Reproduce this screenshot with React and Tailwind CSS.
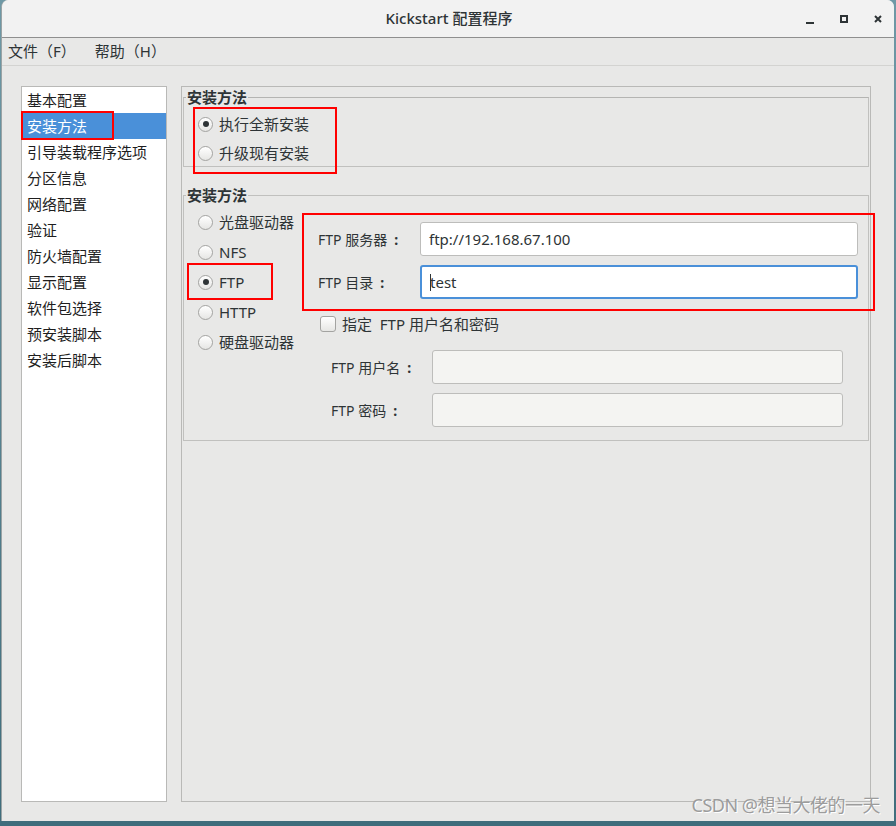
import React from 'react'

const cjk = { fontFamily: '"Noto Sans", "Noto Sans CJK SC", sans-serif' }

const navItems = [
  '基本配置',
  '安装方法',
  '引导装载程序选项',
  '分区信息',
  '网络配置',
  '验证',
  '防火墙配置',
  '显示配置',
  '软件包选择',
  '预安装脚本',
  '安装后脚本',
]

const methods = ['光盘驱动器', 'NFS', 'FTP', 'HTTP', '硬盘驱动器']

function Radio({ checked }) {
  return (
    <span className="w-[15px] h-[15px] rounded-full border border-[#a3a3a1] bg-gradient-to-b from-white to-[#e6e6e4] flex items-center justify-center shrink-0 shadow-[inset_0_1px_0_#fff]">
      {checked && <span className="w-[6px] h-[6px] rounded-full bg-[#2e3436]" />}
    </span>
  )
}

function RadioRow({ label, checked, h = 'h-[30px]' }) {
  return (
    <div className={`flex items-center gap-[6px] ${h}`}>
      <Radio checked={checked} />
      <span className="text-[15px] text-[#2e3436]">{label}</span>
    </div>
  )
}

function Field({ label, value, focused, disabled, labelW }) {
  return (
    <div className="flex items-center h-[34px]">
      <span className={`text-[14px] text-[#2e3436] shrink-0 flex items-center ${labelW}`}>
        {label}
        <span className="ml-[7px] font-bold">:</span>
      </span>
      <div
        className={
          'flex-1 h-[34px] rounded-[3px] flex items-center px-[8px] text-[15px] text-[#2e3436] ' +
          (focused
            ? 'border-2 border-[#4a90d9] bg-white'
            : disabled
            ? 'border border-[#bdbdbb] bg-[#f4f4f2]'
            : 'border border-[#bdbdbb] bg-white')
        }
      >
        {focused && <span className="w-[1px] h-[17px] bg-[#2e3436] -mr-[1px]" />}
        {value}
      </div>
    </div>
  )
}

function Legend({ children }) {
  return (
    <legend className="ml-[2px] px-[1px] text-[15px] leading-[20px] font-bold text-[#2e3436]">
      {children}
    </legend>
  )
}

export default function App() {
  return (
    <div className="w-[896px] h-[826px] bg-gradient-to-b from-[#6f99a6] to-[#3f6d7c] pl-[1px] pr-[2px] relative overflow-hidden" style={cjk}>
      <div className="w-[893px] h-[821px] bg-[#e8e8e7] rounded-t-[7px] flex flex-col border-l border-[#9aa3a5]">
        {/* title bar */}
        <div className="h-[38px] shrink-0 bg-[#f2f2f2] border-b border-[#8f8f8f] rounded-t-[7px] flex items-center relative">
          <div className="flex-1 text-center text-[15px] font-medium text-[#2e3436] pl-[2px]">Kickstart 配置程序</div>
          <div className="absolute right-[12px] top-[15px] flex items-start gap-[26px]">
            <span className="w-[8px] h-[8px] flex items-end"><span className="w-[8px] h-[2px] bg-[#2e3436] mb-[-1px]" /></span>
            <span className="w-[8px] h-[8px] border-2 border-[#2e3436]" />
            <svg width="8" height="8" viewBox="0 0 8 8"><path d="M1 1L7 7M7 1L1 7" stroke="#2e3436" strokeWidth="2" /></svg>
          </div>
        </div>
        {/* menu */}
        <div className="h-[28px] shrink-0 border-b border-[#d3d3d1] flex items-center text-[15px] text-[#2e3436]">
          <span className="ml-[6px]">文件（F）</span>
          <span className="ml-[19px]">帮助（H）</span>
        </div>
        {/* content */}
        <div className="flex pt-[20px] pl-[19px]">
          <div className="w-[146px] h-[716px] bg-white border border-[#b9b9b7]">
            {navItems.map((t, i) => (
              <div
                key={t}
                className={
                  'h-[26px] flex items-center pl-[5px] text-[15px] ' +
                  (i === 1 ? 'bg-[#4a90d9] text-white' : 'text-[#1e1e1e]')
                }
              >
                {t}
              </div>
            ))}
          </div>
          <div className="ml-[14px] w-[690px] h-[716px] border border-[#b9b9b7] px-[1px]">
            <fieldset className="border border-[#c0c0be] border-t-[#b4b4b2] pb-[1px]">
              <Legend>安装方法</Legend>
              <div className="pl-[14px] pt-[5px]">
                <RadioRow label="执行全新安装" checked h="h-[24px]" />
                <div className="h-[5px]" />
                <RadioRow label="升级现有安装" h="h-[24px]" />
              </div>
            </fieldset>
            <fieldset className="mt-[18px] border border-[#c0c0be] pb-[13px]">
              <Legend>安装方法</Legend>
              <div className="flex">
                <div className="w-[134px] pl-[14px] pt-[2px] shrink-0">
                  {methods.map((m) => (
                    <RadioRow key={m} label={m} checked={m === 'FTP'} />
                  ))}
                </div>
                <div className="w-[550px] pt-[17px] pr-[10px]">
                  <Field label="FTP 服务器" value="ftp://192.168.67.100" labelW="w-[102px]" />
                  <div className="h-[9px]" />
                  <Field label="FTP 目录" value="test" focused labelW="w-[102px]" />
                  <div className="mt-[16px] h-[18px] flex items-center ml-[2px] gap-[6px]">
                    <span className="w-[16px] h-[16px] rounded-[3px] border border-[#a3a3a1] bg-gradient-to-b from-white to-[#e6e6e4]" />
                    <span className="text-[15px] text-[#2e3436]">指定&nbsp;&nbsp;FTP 用户名和密码</span>
                  </div>
                  <div className="mt-[17px] pl-[13px] pr-[15px]">
                    <Field label="FTP 用户名" value="" disabled labelW="w-[101px]" />
                    <div className="h-[9px]" />
                    <Field label="FTP 密码" value="" disabled labelW="w-[101px]" />
                  </div>
                </div>
              </div>
            </fieldset>
          </div>
        </div>
      </div>

      {/* annotation boxes */}
      <div className="absolute left-[21px] top-[111px] w-[93px] h-[29px] border-2 border-[#ff0000]" />
      <div className="absolute left-[193px] top-[107px] w-[144px] h-[67px] border-2 border-[#ff0000]" />
      <div className="absolute left-[187px] top-[263px] w-[86px] h-[37px] border-2 border-[#ff0000]" />
      <div className="absolute left-[302px] top-[213px] w-[573px] h-[98px] border-2 border-[#ff0000]" />

      <div className="absolute right-[16px] top-[792px] text-[18px] tracking-[-0.5px] text-[#9c9c9c] [text-shadow:1px_1px_0_#ffffff]">
        CSDN @想当大佬的一天
      </div>
    </div>
  )
}
